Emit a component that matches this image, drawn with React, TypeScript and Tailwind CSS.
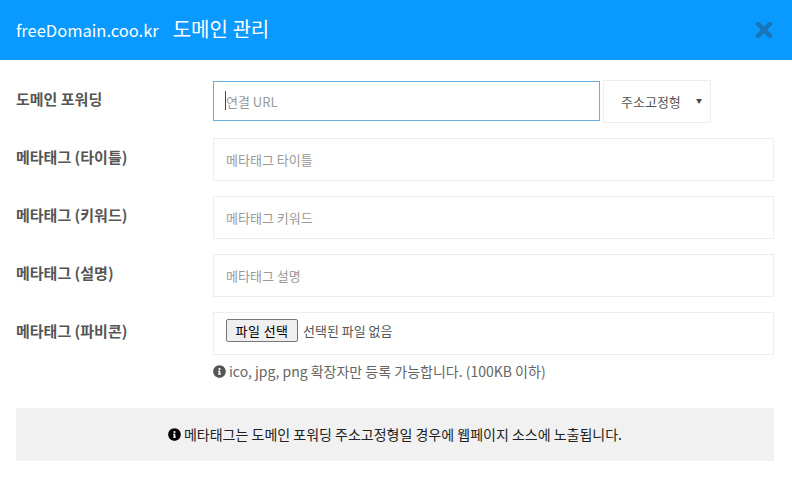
import React from 'react';
import { FaInfoCircle, FaTimes } from 'react-icons/fa';

const font = "font-['Noto_Sans_CJK_KR','Noto_Sans',sans-serif]";

const metaRows = [
  { label: '메타태그 (타이틀)', placeholder: '메타태그 타이틀' },
  { label: '메타태그 (키워드)', placeholder: '메타태그 키워드' },
  { label: '메타태그 (설명)', placeholder: '메타태그 설명' },
];

const Label = ({ children }: { children: React.ReactNode }) => (
  <label className="w-[197px] shrink-0 pt-[9px] text-[15px] leading-[20px] font-bold text-[#555]">{children}</label>
);

export default function App() {
  return (
    <div className={`${font} w-[792px] h-[479px] bg-white overflow-hidden`}>
      <div className="h-[60px] bg-[#0a99ff] flex items-center justify-between pl-[16px] pr-[16px]">
        <div className="flex items-baseline gap-[14px] pb-[2px] text-white">
          <span className="text-[16.5px]">freeDomain.coo.kr</span>
          <span className="text-[20px]">도메인 관리</span>
        </div>
        <FaTimes className="w-[24px] h-[24px] text-[#1a74b8]" />
      </div>

      <div className="pl-[16px] pr-[18px] pt-[20px]">
        <div className="flex h-[43px]">
          <Label>도메인 포워딩</Label>
          <div className="relative mt-[1px] w-[387px] h-[40px]">
            <input
              placeholder="연결 URL"
              className="w-full h-full border border-[#66afe0] px-[12px] text-[13px] text-[#555] outline-none placeholder:text-[#999]"
            />
            <span className="absolute left-[12px] top-[10px] w-[1px] h-[19px] bg-[#444]" />
          </div>
          <div className="relative ml-[3px] w-[108px] h-[43px] border border-[#eee] flex items-center pl-[17px] text-[13px] text-[#555]">
            주소고정형
            <span className="absolute right-[8px] top-[15px] text-[6px] leading-[10px] text-[#444]">▼</span>
          </div>
        </div>

        <div className="flex flex-col gap-[15px] mt-[15px]">
          {metaRows.map((row) => (
            <div key={row.label} className="flex h-[43px]">
              <Label>{row.label}</Label>
              <input
                placeholder={row.placeholder}
                className="flex-1 border border-[#eee] px-[12px] text-[13px] text-[#555] outline-none placeholder:text-[#999]"
              />
            </div>
          ))}

          <div className="flex h-[43px]">
            <Label>메타태그 (파비콘)</Label>
            <div className="flex-1 border border-[#eee] flex items-center pl-[12px] pb-[6px] text-[13px] text-[#555]">
              <button className="h-[23px] w-[72px] bg-[#efefef] border border-[#767676] rounded-[2px] text-[13px] text-black tracking-[0.4px] flex items-center justify-center">
                파일 선택
              </button>
              <span className="ml-[5px]">선택된 파일 없음</span>
            </div>
          </div>
        </div>

        <div className="flex items-center gap-[3px] ml-[197px] mt-[6px] h-[20px] text-[14px] text-[#666]">
          <FaInfoCircle className="w-[13px] h-[13px] text-[#555]" />
          <span>ico, jpg, png 확장자만 등록 가능합니다. (100KB 이하)</span>
        </div>

        <div className="mt-[27px] h-[53px] bg-[#f1f1f1] flex items-center justify-center gap-[3px] text-[14px] text-[#222]">
          <FaInfoCircle className="w-[13px] h-[13px] text-black" />
          <span>메타태그는 도메인 포워딩 주소고정형일 경우에 웹페이지 소스에 노출됩니다.</span>
        </div>
      </div>
    </div>
  );
}
